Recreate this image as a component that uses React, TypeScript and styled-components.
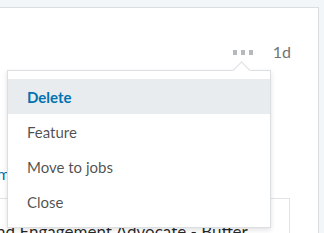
import React from 'react'
import styled, { createGlobalStyle } from 'styled-components'

const GlobalStyle = createGlobalStyle`
    html, body {
        margin: 0;
        padding: 0;
        background: #f3f6f8;
        font-family: Lato, "Open Sans", sans-serif;
        overflow: hidden;
    }
`

const Page = styled.div`
    width: 324px;
    height: 233px;
    padding-top: 7px;
    box-sizing: border-box;
    overflow: hidden;
`

const Card = styled.div`
    position: relative;
    margin-left: -20px;
    width: 339px;
    height: 260px;
    box-sizing: border-box;
    background: #fff;
    border: 1px solid #dadde0;
    padding: 34px 0 0 16px;
`

const Header = styled.div`
    display: flex;
    justify-content: flex-end;
    align-items: center;
    gap: 20px;
    height: 20px;
    padding-right: 27px;
`

const Dots = styled.button`
    display: flex;
    gap: 4px;
    padding: 0;
    border: none;
    background: none;
    cursor: pointer;
`

const Dot = styled.span`
    width: 4px;
    height: 5px;
    background: #b6b9bc;
`

const Age = styled.span`
    font-size: 16px;
    line-height: 20px;
    color: #737373;
`

const Link = styled.a`
    display: block;
    margin: 102px 0 0 0;
    font-size: 16px;
    line-height: 20px;
    color: #0073b1;
    text-decoration: none;
`

const Attachment = styled.div`
    margin-top: 14px;
    width: 283px;
    border: 1px solid #e1e4e6;
    padding: 22px 4px;
    overflow: hidden;
`

const AttachmentTitle = styled.div`
    margin-left: -105px;
    font-size: 17px;
    color: rgba(0, 0, 0, 0.85);
    white-space: nowrap;
`

const Menu = styled.ul`
    position: absolute;
    left: 26px;
    top: 62px;
    width: 264px;
    box-sizing: border-box;
    margin: 0;
    padding: 8px 0;
    list-style: none;
    background: #fff;
    border: 1px solid #dcdfe2;
    box-shadow: 0 2px 5px rgba(0, 0, 0, 0.12);

    &::before {
        content: '';
        position: absolute;
        top: -7px;
        left: 227px;
        width: 12px;
        height: 12px;
        background: #fff;
        border-top: 1px solid #dcdfe2;
        border-left: 1px solid #dcdfe2;
        transform: rotate(45deg);
    }
`

const Item = styled.li<{ $active?: boolean }>`
    position: relative;
    height: 35px;
    display: flex;
    align-items: center;
    padding: 0 19px;
    font-size: 15px;
    font-weight: ${p => (p.$active ? 700 : 400)};
    color: ${p => (p.$active ? '#0073b1' : 'rgba(0, 0, 0, 0.7)')};
    background: ${p => (p.$active ? '#e9ecef' : 'transparent')};
    cursor: pointer;
`

const items = ['Delete', 'Feature', 'Move to jobs', 'Close']

const App = () => {
    return (
        <Page>
            <GlobalStyle />
            <Card>
                <Header>
                    <Dots aria-label="More actions">
                        <Dot />
                        <Dot />
                        <Dot />
                    </Dots>
                    <Age>1d</Age>
                </Header>
                <Link href="#">mbuffer.com</Link>
                <Attachment>
                    <AttachmentTitle>Community and Engagement Advocate - Buffer</AttachmentTitle>
                </Attachment>
                <Menu>
                    {items.map((item, i) => (
                        <Item key={item} $active={i === 0}>{item}</Item>
                    ))}
                </Menu>
            </Card>
        </Page>
    )
}

export default App
